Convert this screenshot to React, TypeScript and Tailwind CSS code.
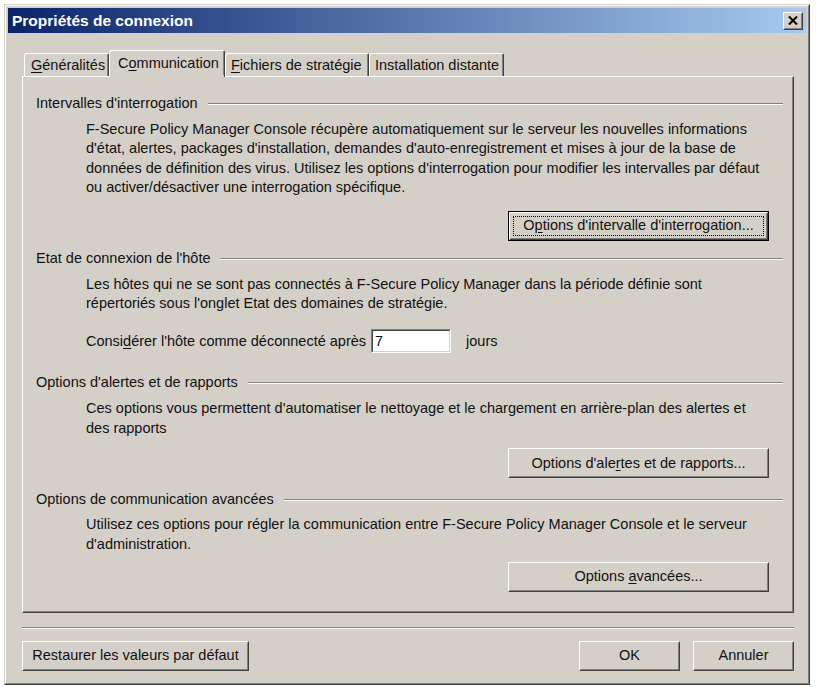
import type { ReactNode } from "react";

function U({ children }: { children: ReactNode }) {
    return <span className="underline underline-offset-2">{children}</span>;
}

function Button({ children, width, isDefault }: { children: ReactNode; width: string; isDefault?: boolean }) {
    if (isDefault) {
        return (
            <div className={`${width} h-[30px] border border-black`}>
                <div className="h-full border border-t-white border-l-white border-r-[#404040] border-b-[#404040]">
                    <div className="h-full border border-t-[#d4d0c8] border-l-[#d4d0c8] border-r-[#808080] border-b-[#808080] p-[2px]">
                        <div className="h-full border border-dotted border-black flex items-center justify-center">
                            {children}
                        </div>
                    </div>
                </div>
            </div>
        );
    }
    return (
        <div className={`${width} h-[30px] border border-t-white border-l-white border-r-[#404040] border-b-[#404040]`}>
            <div className="h-full border border-t-[#d4d0c8] border-l-[#d4d0c8] border-r-[#808080] border-b-[#808080] flex items-center justify-center">
                {children}
            </div>
        </div>
    );
}

function GroupHeader({ title }: { title: string }) {
    return (
        <div className="flex items-center h-[19px] pl-[13px] pr-[9px]">
            <span className="whitespace-nowrap">{title}</span>
            <div className="flex-1 ml-[10px] border-t border-t-[#808080] border-b border-b-white" />
        </div>
    );
}

function Tab({ children, width, selected, pl }: { children: ReactNode; width: string; selected?: boolean; pl: string }) {
    return (
        <div
            className={`${width} ${pl} ${selected ? "h-[27px] z-10 -mb-px pb-[2px]" : "h-[23px]"} bg-[#d4d0c8] border-t border-l border-t-white border-l-white border-r border-r-[#404040] rounded-tl-[3px] rounded-tr-[2px] flex items-center`}
        >
            <div className="h-full flex-1 flex items-center pt-[2px] border-r border-r-[#808080] whitespace-nowrap">{children}</div>
        </div>
    );
}

export default function App() {
    return (
        <div className="min-h-screen bg-white pt-[4px] pl-[4px] font-['Liberation_Sans',Arial,sans-serif] text-[14.5px] text-[#111]">
            <div className="w-[806px] h-[681px] border border-t-[#d4d0c8] border-l-[#d4d0c8] border-r-[#404040] border-b-[#404040] bg-[#d4d0c8]">
                <div className="h-full border border-t-white border-l-white border-r-[#808080] border-b-[#808080] p-[2px] flex flex-col">
                    {/* title bar */}
                    <div className="h-[25px] bg-[linear-gradient(90deg,#0a246a_0%,#a6caf0_100%)] flex items-center pl-[4px] pr-[3px]">
                        <span className="flex-1 text-white font-bold text-[15.5px]">Propriétés de connexion</span>
                        <div className="w-[20px] h-[18px] border border-t-white border-l-white border-r-[#404040] border-b-[#404040] bg-[#d4d0c8]">
                            <div className="h-full border border-t-[#d4d0c8] border-l-[#d4d0c8] border-r-[#808080] border-b-[#808080] flex items-center justify-center">
                                <svg width="10" height="9" viewBox="0 0 10 9">
                                    <path d="M1 0.5 L9 8.5 M9 0.5 L1 8.5" stroke="black" strokeWidth="2" />
                                </svg>
                            </div>
                        </div>
                    </div>

                    {/* body */}
                    <div className="flex-1 flex flex-col pl-[14px] pr-[12px]">
                        {/* tabs */}
                        <div className="mt-[17px] h-[26px] flex items-end pl-[2px]">
                            <Tab width="w-[85px]" pl="pl-[6px]"><span><U>G</U>énéralités</span></Tab>
                            <Tab width="w-[116px]" pl="pl-[8px]" selected><span>C<U>o</U>mmunication</span></Tab>
                            <Tab width="w-[144px]" pl="pl-[5px]"><span><U>F</U>ichiers de stratégie</span></Tab>
                            <Tab width="w-[135px]" pl="pl-[5px]"><span>Installation distante</span></Tab>
                        </div>

                        {/* panel */}
                        <div className="h-[537px] border border-t-white border-l-white border-r-[#404040] border-b-[#404040]">
                            <div className="h-full border-r border-b border-r-[#808080] border-b-[#808080] flex flex-col pt-[17px] leading-[19.4px]">
                                <GroupHeader title="Intervalles d'interrogation" />
                                <div className="pl-[63px] mt-[7px]">
                                    <p>F-Secure Policy Manager Console récupère automatiquement sur le serveur les nouvelles informations</p>
                                    <p>d'état, alertes, packages d'installation, demandes d'auto-enregistrement et mises à jour de la base de</p>
                                    <p>données de définition des virus. Utilisez les options d'interrogation pour modifier les intervalles par défaut</p>
                                    <p>ou activer/désactiver une interrogation spécifique.</p>
                                </div>
                                <div className="flex justify-end pr-[23px] mt-[13px]">
                                    <Button width="w-[261px]" isDefault>
                                        <span>O<U>p</U>tions d'intervalle d'interrogation...</span>
                                    </Button>
                                </div>

                                <div className="mt-[9px]">
                                    <GroupHeader title="Etat de connexion de l'hôte" />
                                </div>
                                <div className="pl-[63px] mt-[6px]">
                                    <p>Les hôtes qui ne se sont pas connectés à F-Secure Policy Manager dans la période définie sont</p>
                                    <p>répertoriés sous l'onglet Etat des domaines de stratégie.</p>
                                </div>
                                <div className="pl-[63px] mt-[16px] flex items-center h-[24px]">
                                    <span>Consi<U>d</U>érer l'hôte comme déconnecté après</span>
                                    <div className="ml-[5px] w-[80px] h-[24px] border border-t-[#808080] border-l-[#808080] border-r-white border-b-white">
                                        <div className="h-full border border-t-[#404040] border-l-[#404040] border-r-[#d4d0c8] border-b-[#d4d0c8] bg-white flex items-center pl-[2px]">
                                            7
                                        </div>
                                    </div>
                                    <span className="ml-[15px]">jours</span>
                                </div>

                                <div className="mt-[20px]">
                                    <GroupHeader title="Options d'alertes et de rapports" />
                                </div>
                                <div className="pl-[63px] mt-[7px]">
                                    <p>Ces options vous permettent d'automatiser le nettoyage et le chargement en arrière-plan des alertes et</p>
                                    <p>des rapports</p>
                                </div>
                                <div className="flex justify-end pr-[23px] mt-[10px]">
                                    <Button width="w-[261px]">
                                        <span>Options d'ale<U>r</U>tes et de rapports...</span>
                                    </Button>
                                </div>

                                <div className="mt-[12px]">
                                    <GroupHeader title="Options de communication avancées" />
                                </div>
                                <div className="pl-[63px] mt-[6px]">
                                    <p>Utilisez ces options pour régler la communication entre F-Secure Policy Manager Console et le serveur</p>
                                    <p>d'administration.</p>
                                </div>
                                <div className="flex justify-end pr-[23px] mt-[8px]">
                                    <Button width="w-[261px]">
                                        <span>Options <U>a</U>vancées...</span>
                                    </Button>
                                </div>
                            </div>
                        </div>

                        {/* separator */}
                        <div className="mt-[14px] border-t border-t-[#808080] border-b border-b-white" />

                        {/* bottom buttons */}
                        <div className="mt-[12px] flex items-center">
                            <Button width="w-[227px]">
                                <span>Restaurer les valeurs par défaut</span>
                            </Button>
                            <div className="flex-1" />
                            <Button width="w-[101px]">
                                <span>OK</span>
                            </Button>
                            <div className="w-[13px]" />
                            <Button width="w-[101px]">
                                <span>Annuler</span>
                            </Button>
                        </div>
                    </div>
                </div>
            </div>
        </div>
    );
}
